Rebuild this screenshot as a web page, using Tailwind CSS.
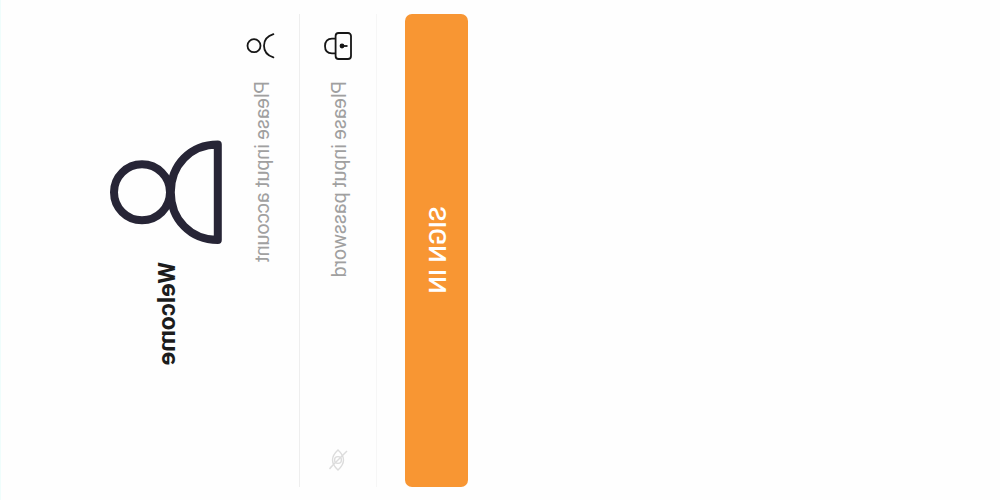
<!DOCTYPE html>
<html lang="en">
<head>
<meta charset="utf-8">
<title>Welcome</title>
<script src="https://cdn.jsdelivr.net/npm/@tailwindcss/browser@4"></script>
</head>
<body class="bg-[#fefefe] font-[Roboto,sans-serif]">
<div class="w-[1000px] h-[500px] overflow-hidden">
<!-- Portrait sign-in screen, mirrored along its diagonal -->
<main class="w-[500px] h-[1000px] origin-top-left [transform:matrix(0,1,1,0,0,0)] px-[13.5px] pt-[109px] border-t border-[#effdfc]">
  <header class="flex h-[112px] items-center pl-[126.5px] gap-[17px]">
    <svg class="w-[105px] h-[112px] shrink-0 overflow-visible" viewBox="0 0 105 112" fill="none" stroke="#272536" stroke-width="8" stroke-linejoin="round">
      <circle cx="52.3" cy="32" r="28"/>
      <path d="M4.5 107.8C4.5 80.5 25 60.8 52.2 60.8S100 80.5 100 107.8Z"/>
    </svg>
    <h1 class="mt-[2px] text-[24.8px] leading-8 font-bold text-[#1c1c1c]">Welcome</h1>
  </header>
  <div class="flex h-[78px] items-center border-b border-[#eeeeee] pl-[18.5px]">
    <svg class="w-7 h-7 shrink-0 overflow-visible" viewBox="0 0 28 28" fill="none" stroke="#161616" stroke-width="1.8" stroke-linecap="round">
      <circle cx="13.7" cy="7" r="6.5"/>
      <path d="M2.2 26.4C4 20.5 8.5 17 13.8 17S23.6 20.5 25.4 26.4"/>
    </svg>
    <span class="ml-[21px] mt-[2px] text-[20px] leading-6 tracking-[-0.25px] text-[#a0a0a0]">Please input account</span>
  </div>
  <div class="flex h-[77px] items-center border-b border-[#f6f6f6] pl-[18.5px] pr-[15px]">
    <svg class="w-7 h-7 shrink-0 overflow-visible" viewBox="0 0 28 28" fill="none" stroke="#161616" stroke-width="1.8">
      <rect x="1" y="11.6" width="26" height="15.4" rx="3"/>
      <path d="M6.7 11.4V8C6.7 3.5 9.5 1 14 1S21.3 3.5 21.3 8v3.4"/>
      <circle cx="14" cy="18" r="2.4" fill="#161616" stroke="none"/>
      <path d="M14 18v5.5"/>
    </svg>
    <span class="ml-[21px] mt-[2px] text-[20px] leading-6 tracking-[-0.25px] text-[#a0a0a0]">Please input password</span>
    <svg class="ml-auto w-6 h-5 shrink-0" viewBox="0 0 24 20" fill="none" stroke="#dcdcdc" stroke-width="1.4">
      <path d="M2 10Q12-1 22 10Q12 21 2 10Z"/>
      <circle cx="12" cy="10" r="3.4"/>
      <path d="M21 1.5L17 5M4 18L3 19M20 2L4 18"/>
    </svg>
  </div>
  <button class="mt-[27.5px] flex h-[63px] w-full items-center justify-center rounded-[7px] bg-[#f89633] pt-[4px] text-[24.5px] tracking-[0.2px] font-medium text-white">SIGN IN</button>
</main>
</div>
</body>
</html>
